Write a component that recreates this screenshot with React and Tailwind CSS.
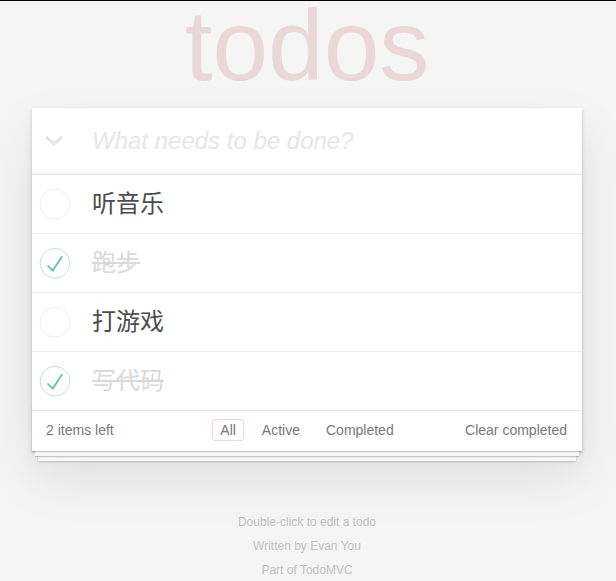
import React, { useState } from 'react';

const initialTodos = [
    { id: 1, title: '听音乐', completed: false },
    { id: 2, title: '跑步', completed: true },
    { id: 3, title: '打游戏', completed: false },
    { id: 4, title: '写代码', completed: true },
];

const ToggleCircle = ({ checked }) => (
    <svg width="40" height="40" viewBox="-10 -18 100 135" className="shrink-0">
        <circle cx="50" cy="50" r="50" fill="none" stroke={checked ? '#bddad5' : '#ededed'} strokeWidth="3" />
        {checked && <path fill="#5dc2af" d="M72 25L42 71 27 56l-4 4 20 20 34-52z" />}
    </svg>
);

const TodoItem = ({ todo, isLast, onToggle }) => (
    <li className={`flex items-center h-[58px] ${isLast ? '' : 'border-b border-[#ededed] box-content'}`}>
        <button onClick={() => onToggle(todo.id)} className="flex items-center">
            <ToggleCircle checked={todo.completed} />
        </button>
        <label
            className={`ml-5 text-[24px] leading-[28px] ${todo.completed ? 'text-[#d9d9d9] line-through' : 'text-[#4d4d4d]'}`}
        >
            {todo.title}
        </label>
    </li>
);

const App = () => {
    const [todos, setTodos] = useState(initialTodos);
    const [filter, setFilter] = useState('All');

    const toggle = (id) =>
        setTodos(todos.map((t) => (t.id === id ? { ...t, completed: !t.completed } : t)));

    const left = todos.filter((t) => !t.completed).length;

    return (
        <div className="min-h-screen bg-[#f5f5f5] font-['Liberation_Sans','Noto_Sans_CJK_SC',sans-serif] text-[14px]">
            <div className="h-px bg-black" />
            <div className="w-[550px] ml-[32px]">
                <h1 className="h-[107px] text-center text-[100px] leading-[88px] text-[rgba(175,47,47,0.15)]">
                    todos
                </h1>

                <section className="bg-white shadow-[0_2px_4px_rgba(0,0,0,0.2),0_25px_50px_rgba(0,0,0,0.1)]">
                    <header className="flex items-center h-[66px] shadow-[inset_0_-2px_1px_rgba(0,0,0,0.03)]">
                        <div className="w-[60px] flex justify-start pl-[12px]">
                            <svg width="20" height="12" viewBox="0 0 20 12">
                                <path d="M2 2l8 7 8-7" fill="none" stroke="#e6e6e6" strokeWidth="3" />
                            </svg>
                        </div>
                        <input
                            className="flex-1 pr-4 text-[24px] leading-[34px] outline-none bg-transparent placeholder:italic placeholder:text-[#e6e6e6]"
                            placeholder="What needs to be done?"
                        />
                    </header>

                    <ul className="border-t border-[#e6e6e6]">
                        {todos.map((todo, i) => (
                            <TodoItem key={todo.id} todo={todo} isLast={i === todos.length - 1} onToggle={toggle} />
                        ))}
                    </ul>

                    <footer className="relative flex items-center border-t border-[#e6e6e6] px-[15px] pb-[2px] h-[41px] text-[#777]">
                        <div className="absolute inset-x-0 bottom-0 h-[50px] overflow-hidden pointer-events-none shadow-[0_1px_1px_rgba(0,0,0,0.2),0_8px_0_-3px_#f6f6f6,0_9px_1px_-3px_rgba(0,0,0,0.2),0_16px_0_-6px_#f6f6f6,0_17px_2px_-6px_rgba(0,0,0,0.2)]" />
                        <div className="relative w-full grid grid-cols-[1fr_auto_1fr] items-center">
                            <span className="leading-[20px] -ml-px">{left} items left</span>
                            <ul className="flex items-center gap-[4px]">
                                {['All', 'Active', 'Completed'].map((f) => (
                                    <li key={f} className="flex">
                                        <button
                                            onClick={() => setFilter(f)}
                                            className={`m-[3px] px-[7px] py-[3px] leading-[14px] rounded-[3px] border ${filter === f ? 'border-[rgba(175,47,47,0.2)]' : 'border-transparent'}`}
                                        >
                                            {f}
                                        </button>
                                    </li>
                                ))}
                            </ul>
                            <button className="justify-self-end leading-[19px] mt-[1px]">Clear completed</button>
                        </div>
                    </footer>
                </section>

                <footer className="mt-[65px] flex flex-col gap-[12px] text-center text-[12px] leading-[12px] text-[#bfbfbf]">
                    <p>Double-click to edit a todo</p>
                    <p>Written by Evan You</p>
                    <p>Part of TodoMVC</p>
                </footer>
            </div>
        </div>
    );
};

export default App;
